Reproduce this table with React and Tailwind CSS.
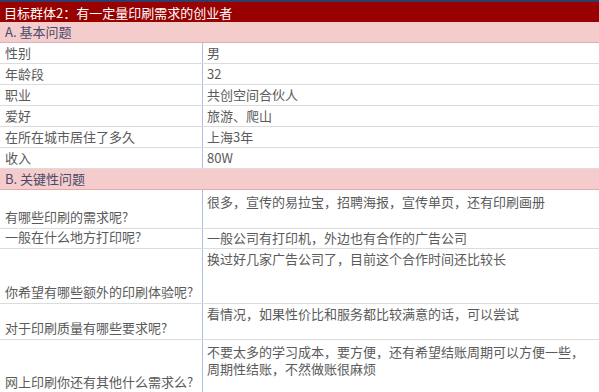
export default function App() {
  const basic = [
    ["性别", "男"],
    ["年龄段", "32"],
    ["职业", "共创空间合伙人"],
    ["爱好", "旅游、爬山"],
    ["在所在城市居住了多久", "上海3年"],
    ["收入", "80W"],
  ];
  const key = [
    { q: "有哪些印刷的需求呢?", a: ["很多，宣传的易拉宝，招聘海报，宣传单页，还有印刷画册"], h: "h-[39px]", pt: "pt-[3px]" },
    { q: "一般在什么地方打印呢?", a: ["一般公司有打印机，外边也有合作的广告公司"], h: "h-[20px]", pt: "pt-0" },
    { q: "你希望有哪些额外的印刷体验呢?", a: ["换过好几家广告公司了，目前这个合作时间还比较长"], h: "h-[55px]", pt: "pt-[1px]" },
    { q: "对于印刷质量有哪些要求呢?", a: ["看情况，如果性价比和服务都比较满意的话，可以尝试"], h: "h-[36px]", pt: "pt-[1px]" },
    { q: "网上印刷你还有其他什么需求么?", a: ["不要太多的学习成本，要方便，还有希望结账周期可以方便一些，", "周期性结账，不然做账很麻烦"], h: "h-[54px]", pt: "pt-[3px]" },
  ];
  return (
    <div
      className="w-[599px] h-[392px] overflow-hidden bg-white text-[13px] text-[#5a5a5a]"
      style={{ fontFamily: '"Noto Sans CJK SC", "Noto Sans", sans-serif' }}
    >
      <div className="h-[2px] bg-[#2e3d6a]" />
      <div className="h-[20px] bg-[#990000] text-white pl-[4px] leading-[20px] flex items-end">
        <span className="relative top-[1px]">目标群体2：有一定量印刷需求的创业者</span>
      </div>
      <div className="h-[21px] bg-[#f4cccc] border-b border-[#d9b3b3] pl-[5px] leading-[20px] text-[#4a4a6a] flex items-end">
        A. 基本问题
      </div>
      {basic.map(([l, r]) => (
        <div key={l} className="h-[21px] flex border-b border-[#dcdcdc]">
          <div className="w-[203px] shrink-0 border-r border-[#a9c1dc] pl-[5px] leading-[20px] flex items-end">{l}</div>
          <div className="flex-1 pl-[4px] leading-[20px] flex items-end">{r}</div>
        </div>
      ))}
      <div className="h-[21px] bg-[#f4cccc] border-b border-[#e6a9a9] pl-[5px] leading-[20px] text-[#4a4a6a] flex items-end">
        B. 关键性问题
      </div>
      {key.map((row) => (
        <div key={row.q} className={`${row.h} flex border-b border-[#dcdcdc]`}>
          <div className="w-[203px] shrink-0 border-r border-[#a9c1dc] pl-[5px] leading-[20px] flex items-end pb-[1px]">{row.q}</div>
          <div className={`flex-1 pl-[4px] leading-[17px] ${row.pt}`}>
            {row.a.map((t) => (
              <div key={t}>{t}</div>
            ))}
          </div>
        </div>
      ))}
    </div>
  );
}
